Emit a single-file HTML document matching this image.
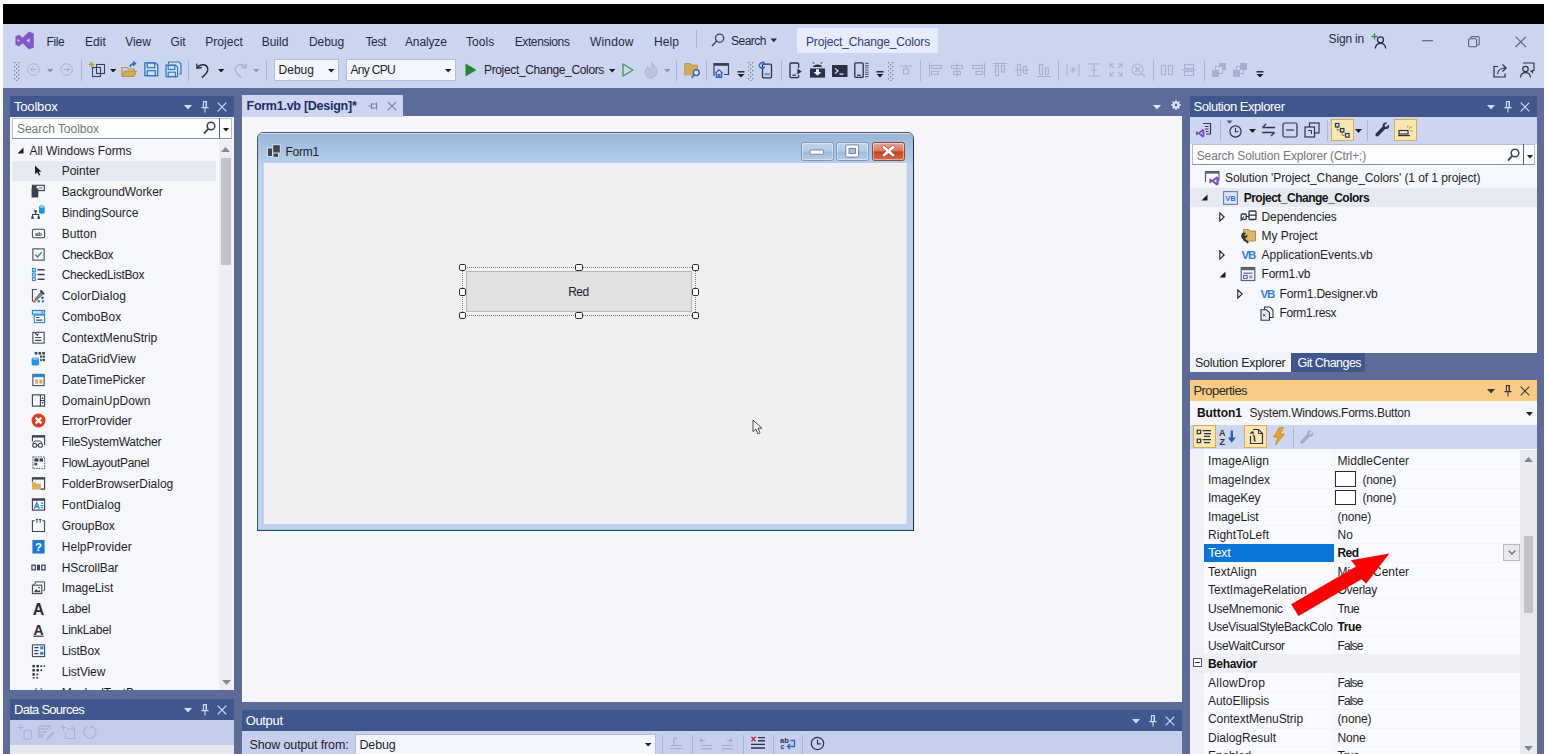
<!DOCTYPE html>
<html lang="en"><head><meta charset="utf-8"><title>Project_Change_Colors - Microsoft Visual Studio</title><style>
html,body{margin:0;padding:0;background:#fff;}
body{width:1548px;height:754px;position:relative;overflow:hidden;font-family:"Liberation Sans",sans-serif;}
#root{position:absolute;left:0;top:0;width:1548px;height:754px;overflow:hidden;}
#root div,#root span,#root svg{position:absolute;box-sizing:border-box;}
.t{white-space:nowrap;line-height:16px;height:16px;}
</style></head><body><div id="root">
<div style="left:3px;top:4px;width:1541px;height:750px;background:#5d6b99;"></div>
<div style="left:3px;top:4px;width:1541px;height:20px;background:#000;"></div>
<div style="left:3px;top:24px;width:1541px;height:64px;background:#ccd5f0;"></div>
<svg style="left:15px;top:30.5px;" width="19" height="19" viewBox="0 0 19 19"><path d="M14 0.4 L18.8 2.6 V16.4 L14 18.6 L7.5 12.2 L4 15.6 L0.4 13.4 V5.6 L4 3.4 L7.5 6.8 Z M14.6 7.2 V11.8 L11.4 9.5 Z M2.8 7.9 V11.1 L4.9 9.5 Z" fill="#8456cd" fill-rule="evenodd"></path></svg>
<span class="t" style="left: 46.5px; top: 33.6px; font-size: 12px; color: rgb(31, 42, 68); letter-spacing: -0.411px;">File</span>
<span class="t" style="left: 85px; top: 33.6px; font-size: 12px; color: rgb(31, 42, 68); letter-spacing: 0.078px;">Edit</span>
<span class="t" style="left: 125.3px; top: 33.6px; font-size: 12px; color: rgb(31, 42, 68); letter-spacing: -0.074px;">View</span>
<span class="t" style="left: 170.5px; top: 33.6px; font-size: 12px; color: rgb(31, 42, 68); letter-spacing: -0.115px;">Git</span>
<span class="t" style="left: 205.3px; top: 33.6px; font-size: 12px; color: rgb(31, 42, 68); letter-spacing: 0.02px;">Project</span>
<span class="t" style="left: 261.7px; top: 33.6px; font-size: 12px; color: rgb(31, 42, 68); letter-spacing: -0.017px;">Build</span>
<span class="t" style="left: 309px; top: 33.6px; font-size: 12px; color: rgb(31, 42, 68); letter-spacing: -0.075px;">Debug</span>
<span class="t" style="left: 365.5px; top: 33.6px; font-size: 12px; color: rgb(31, 42, 68); letter-spacing: -0.379px;">Test</span>
<span class="t" style="left: 405px; top: 33.6px; font-size: 12px; color: rgb(31, 42, 68); letter-spacing: -0.143px;">Analyze</span>
<span class="t" style="left: 466px; top: 33.6px; font-size: 12px; color: rgb(31, 42, 68); letter-spacing: 0.057px;">Tools</span>
<span class="t" style="left: 514.7px; top: 33.6px; font-size: 12px; color: rgb(31, 42, 68); letter-spacing: -0.39px;">Extensions</span>
<span class="t" style="left: 590px; top: 33.6px; font-size: 12px; color: rgb(31, 42, 68); letter-spacing: 0.169px;">Window</span>
<span class="t" style="left: 654px; top: 33.6px; font-size: 12px; color: rgb(31, 42, 68); letter-spacing: 0.078px;">Help</span>
<div style="left:696px;top:30px;width:1px;height:18px;background:#a8b2d6;"></div>
<svg style="left:711px;top:33px;" width="14" height="14" viewBox="0 0 14 14"><circle cx="8.6" cy="5.2" r="4.1" fill="none" stroke="#3a425e" stroke-width="1.3"></circle><path d="M5.6 8.2 L1 12.9" stroke="#3a425e" stroke-width="1.5" fill="none"></path></svg>
<span class="t" style="left: 731px; top: 33px; font-size: 12px; color: rgb(31, 42, 68); letter-spacing: -0.505px;">Search</span>
<svg style="left:770px;top:38.2px;" width="8" height="5" viewBox="0 0 8 5"><path d="M0.5 0.5 H7 L3.75 4.2 Z" fill="#1f2a44"></path></svg>
<div style="left:797px;top:28px;width:141px;height:25px;background:#e6ecfb;"></div>
<span class="t" style="left: 806px; top: 34px; font-size: 12px; color: rgb(43, 63, 120); letter-spacing: -0.162px;">Project_Change_Colors</span>
<span class="t" style="left: 1328.6px; top: 31.3px; font-size: 12px; color: rgb(31, 42, 68); letter-spacing: -0.172px;">Sign in</span>
<svg style="left:1371px;top:33px;" width="17" height="17" viewBox="0 0 17 17"><circle cx="9.5" cy="6.8" r="3" fill="none" stroke="#1f2a44" stroke-width="1.3"></circle><path d="M4.3 15.5 C4.6 11.8 7 10.4 9.5 10.4 C12 10.4 14.4 11.8 14.7 15.5" fill="none" stroke="#1f2a44" stroke-width="1.3"></path><path d="M3.5 0.5 V6.5 M0.5 3.5 H6.5" stroke="#2e8b3d" stroke-width="1.3"></path></svg>
<svg style="left:1422px;top:40.3px;" width="11" height="2" viewBox="0 0 11 2"><path d="M0 0.7 H11" stroke="#5a6284" stroke-width="1.2"></path></svg>
<svg style="left:1468px;top:36px;" width="12" height="12" viewBox="0 0 12 12"><rect x="0.6" y="2.8" width="8" height="8" rx="1" fill="none" stroke="#5a6284" stroke-width="1.1"></rect><path d="M2.8 2.6 V1.6 Q2.8 0.6 3.8 0.6 H10.4 Q11.2 0.6 11.2 1.6 V8.2 Q11.2 9 10.2 9 H8.8" fill="none" stroke="#5a6284" stroke-width="1.1"></path></svg>
<svg style="left:1515px;top:36px;" width="12" height="12" viewBox="0 0 12 12"><path d="M0.6 0.6 L11 11 M11 0.6 L0.6 11" stroke="#5a6284" stroke-width="1.1"></path></svg>
<div style="left:0;top:0.9px;width:1548px;height:100px;">
<svg style="left:14px;top:61px;" width="6" height="19" viewBox="0 0 6 19"><rect x="0" y="0" width="1.3" height="1.3" fill="#7a83a6"></rect><rect x="4" y="0" width="1.3" height="1.3" fill="#7a83a6"></rect><rect x="2" y="2" width="1.3" height="1.3" fill="#7a83a6"></rect><rect x="0" y="4" width="1.3" height="1.3" fill="#7a83a6"></rect><rect x="4" y="4" width="1.3" height="1.3" fill="#7a83a6"></rect><rect x="2" y="6" width="1.3" height="1.3" fill="#7a83a6"></rect><rect x="0" y="8" width="1.3" height="1.3" fill="#7a83a6"></rect><rect x="4" y="8" width="1.3" height="1.3" fill="#7a83a6"></rect><rect x="2" y="10" width="1.3" height="1.3" fill="#7a83a6"></rect><rect x="0" y="12" width="1.3" height="1.3" fill="#7a83a6"></rect><rect x="4" y="12" width="1.3" height="1.3" fill="#7a83a6"></rect><rect x="2" y="14" width="1.3" height="1.3" fill="#7a83a6"></rect><rect x="0" y="16" width="1.3" height="1.3" fill="#7a83a6"></rect><rect x="4" y="16" width="1.3" height="1.3" fill="#7a83a6"></rect><rect x="2" y="18" width="1.3" height="1.3" fill="#7a83a6"></rect></svg>
<svg style="left:26.5px;top:62.5px;" width="13" height="13" viewBox="0 0 13 13"><circle cx="6.5" cy="6.5" r="5.8" fill="none" stroke="#a7b0cf" stroke-width="1"></circle><path d="M9.6 6.5 H3.6 M6 4 L3.5 6.5 L6 9" fill="none" stroke="#a7b0cf" stroke-width="1"></path></svg>
<svg style="left:46.8px;top:67.7px;" width="6.4" height="3.6" viewBox="0 0 6.4 3.6"><path d="M0 0 H6.4 L3.2 3.6 Z" fill="#8d95b5"></path></svg>
<svg style="left:59.5px;top:62.5px;" width="13" height="13" viewBox="0 0 13 13"><circle cx="6.5" cy="6.5" r="5.8" fill="none" stroke="#a7b0cf" stroke-width="1"></circle><path d="M3.4 6.5 H9.4 M7 4 L9.5 6.5 L7 9" fill="none" stroke="#a7b0cf" stroke-width="1"></path></svg>
<div style="left:81px;top:59px;width:1px;height:21px;background:#a9b3d6;"></div>
<svg style="left:88px;top:60px;" width="18" height="18" viewBox="0 0 18 18"><rect x="4.5" y="6.5" width="8" height="9" fill="#ccd5f0" stroke="#3b4158" stroke-width="1.1"></rect><rect x="8.5" y="3.5" width="8" height="9" fill="none" stroke="#3b4158" stroke-width="1.1"></rect><path d="M3.5 0.5 V6.5 M0.5 3.5 H6.5 M1.4 1.4 L5.6 5.6 M5.6 1.4 L1.4 5.6" stroke="#c79b2a" stroke-width="1"></path></svg>
<svg style="left:110.3px;top:67.7px;" width="6.4" height="3.6" viewBox="0 0 6.4 3.6"><path d="M0 0 H6.4 L3.2 3.6 Z" fill="#1e1e1e"></path></svg>
<svg style="left:121px;top:60px;" width="17" height="18" viewBox="0 0 17 18"><path d="M1 15.5 V6.5 H6 L7.5 8 H13 V10" fill="none" stroke="#b8923f" stroke-width="1.2"></path><path d="M1 15.5 L3.5 10 H15.5 L13 15.5 Z" fill="#d1ab57" stroke="#b8923f" stroke-width="1"></path><path d="M9 6 C9.5 3.5 11.5 2.5 14 2.5 M12 0.5 L14.5 2.5 L12 4.8" fill="none" stroke="#2f66b8" stroke-width="1.4"></path></svg>
<svg style="left:144px;top:61px;" width="15" height="15" viewBox="0 0 15 15"><g transform="translate(0.3,0.3) scale(1.0)"><path d="M0.6 0.6 H11.2 L13.4 2.8 V13.4 H0.6 Z" fill="#cfe0f7" stroke="#2f6fc4" stroke-width="1.3"></path><rect x="3" y="0.8" width="7.4" height="4.6" fill="#cfe0f7" stroke="#2f6fc4" stroke-width="1.2"></rect><rect x="3" y="8.4" width="8" height="5" fill="#cfe0f7" stroke="#2f6fc4" stroke-width="1.2"></rect></g></svg>
<svg style="left:165px;top:60px;" width="17" height="17" viewBox="0 0 17 17"><path d="M3.5 3 V1 H14 L16 3 V13 H14" fill="#cfe0f7" stroke="#2f6fc4" stroke-width="1.2"></path><g transform="translate(0.5,3.6) scale(0.9)"><path d="M0.6 0.6 H11.2 L13.4 2.8 V13.4 H0.6 Z" fill="#cfe0f7" stroke="#2f6fc4" stroke-width="1.3"></path><rect x="3" y="0.8" width="7.4" height="4.6" fill="#cfe0f7" stroke="#2f6fc4" stroke-width="1.2"></rect><rect x="3" y="8.4" width="8" height="5" fill="#cfe0f7" stroke="#2f6fc4" stroke-width="1.2"></rect></g></svg>
<div style="left:188px;top:59px;width:1px;height:21px;background:#a9b3d6;"></div>
<svg style="left:195px;top:60px;" width="16" height="18" viewBox="0 0 16 18"><path d="M2.2 6.8 C5.5 2.2 12.5 3 12.8 8.2 C13 11.5 10.2 13.8 6.8 16.6" fill="none" stroke="#2b2f42" stroke-width="1.5"></path><path d="M1.6 2.6 L2.2 7.2 L6.8 6.6" fill="none" stroke="#2b2f42" stroke-width="1.5"></path></svg>
<svg style="left:218.3px;top:67.7px;" width="6.4" height="3.6" viewBox="0 0 6.4 3.6"><path d="M0 0 H6.4 L3.2 3.6 Z" fill="#1e1e1e"></path></svg>
<svg style="left:232px;top:60px;" width="16" height="18" viewBox="0 0 16 18"><path d="M13.8 6.8 C10.5 2.2 3.5 3 3.2 8.2 C3 11.5 5.8 13.8 9.2 16.6" fill="none" stroke="#a7b0cf" stroke-width="1.3"></path><path d="M14.4 2.6 L13.8 7.2 L9.2 6.6" fill="none" stroke="#a7b0cf" stroke-width="1.3"></path></svg>
<svg style="left:253.3px;top:67.7px;" width="6.4" height="3.6" viewBox="0 0 6.4 3.6"><path d="M0 0 H6.4 L3.2 3.6 Z" fill="#8d95b5"></path></svg>
<div style="left:266px;top:59px;width:1px;height:21px;background:#a9b3d6;"></div>
<div style="left:274px;top:58px;width:65px;height:22px;background:#f4f6fd;border:1px solid #b4bddc;"></div>
<span class="t" style="left: 278.5px; top: 61px; font-size: 12px; color: rgb(30, 30, 30); letter-spacing: 0.025px;">Debug</span>
<svg style="left:328.3px;top:68.2px;" width="6.4" height="3.6" viewBox="0 0 6.4 3.6"><path d="M0 0 H6.4 L3.2 3.6 Z" fill="#1e1e1e"></path></svg>
<div style="left:346px;top:58px;width:110px;height:22px;background:#f4f6fd;border:1px solid #b4bddc;"></div>
<span class="t" style="left: 350.5px; top: 61px; font-size: 12px; color: rgb(30, 30, 30); letter-spacing: -0.694px;">Any CPU</span>
<svg style="left:445.3px;top:68.2px;" width="6.4" height="3.6" viewBox="0 0 6.4 3.6"><path d="M0 0 H6.4 L3.2 3.6 Z" fill="#1e1e1e"></path></svg>
<svg style="left:465px;top:62px;" width="12" height="14" viewBox="0 0 12 14"><path d="M0.5 0.5 L11.5 7 L0.5 13.5 Z" fill="#1e8a2d"></path></svg>
<span class="t" style="left: 484px; top: 61px; font-size: 12px; color: rgb(30, 30, 30); letter-spacing: -0.353px;">Project_Change_Colors</span>
<svg style="left:608.8px;top:68.2px;" width="6.4" height="3.6" viewBox="0 0 6.4 3.6"><path d="M0 0 H6.4 L3.2 3.6 Z" fill="#1e1e1e"></path></svg>
<svg style="left:622px;top:62px;" width="12" height="14" viewBox="0 0 12 14"><path d="M1 1 L11 7 L1 13 Z" fill="none" stroke="#3c9a4a" stroke-width="1.3" stroke-linejoin="round"></path></svg>
<svg style="left:644px;top:60px;" width="15" height="18" viewBox="0 0 15 18"><path d="M8 1 C9 4 13.5 6.5 13 11.5 C12.6 15 9.8 17 7 17 C3.5 17 1 14.5 1.2 11 C1.4 8.5 3 7.5 3.6 5.5 C5 6.5 5.2 8 5.4 9 C6.8 7 8.4 4.5 8 1 Z" fill="#bcc3dc" stroke="#a7b0cf" stroke-width="0.8"></path></svg>
<svg style="left:663.8px;top:68.2px;" width="6.4" height="3.6" viewBox="0 0 6.4 3.6"><path d="M0 0 H6.4 L3.2 3.6 Z" fill="#8d95b5"></path></svg>
<div style="left:676px;top:59px;width:1px;height:21px;background:#a9b3d6;"></div>
<svg style="left:684px;top:61px;" width="17" height="17" viewBox="0 0 17 17"><path d="M0.8 13.5 V1.5 H6 L7.5 3.2 H13.5 V7" fill="#d1ab57" stroke="#b8923f" stroke-width="1"></path><path d="M0.8 13.5 V4.8 H13.5 V8.5 H9 V13.5 Z" fill="#d1ab57"></path><circle cx="12.3" cy="10.6" r="2.9" fill="#e8eefc" stroke="#2f66b8" stroke-width="1.5"></circle><path d="M10.2 12.8 L7.6 15.8" stroke="#2f66b8" stroke-width="1.7"></path></svg>
<div style="left:706px;top:59px;width:1px;height:21px;background:#a9b3d6;"></div>
<svg style="left:713px;top:61px;" width="17" height="17" viewBox="0 0 17 17"><path d="M1 14 V1.5 H15.5 V12.5 H11" fill="none" stroke="#3b4158" stroke-width="1.2"></path><path d="M1 2.6 H15.5" stroke="#3b4158" stroke-width="2.4"></path><path d="M2.2 11.4 L6 7.8 L9.8 11.4 M3.4 10.8 V15.4 H8.6 V10.8 M5.2 15.4 V12.6 H6.8 V15.4" fill="none" stroke="#2f66b8" stroke-width="1.3"></path></svg>
<svg style="left:737px;top:70.4px;" width="8" height="7" viewBox="0 0 8 7"><path d="M0.5 0.8 H7.5" stroke="#1e1e1e" stroke-width="1.4"></path><path d="M0.5 3 H7.5 L4 6.6 Z" fill="#1e1e1e"></path></svg>
<svg style="left:747.5px;top:61px;" width="6" height="19" viewBox="0 0 6 19"><rect x="0" y="0" width="1.3" height="1.3" fill="#7a83a6"></rect><rect x="4" y="0" width="1.3" height="1.3" fill="#7a83a6"></rect><rect x="2" y="2" width="1.3" height="1.3" fill="#7a83a6"></rect><rect x="0" y="4" width="1.3" height="1.3" fill="#7a83a6"></rect><rect x="4" y="4" width="1.3" height="1.3" fill="#7a83a6"></rect><rect x="2" y="6" width="1.3" height="1.3" fill="#7a83a6"></rect><rect x="0" y="8" width="1.3" height="1.3" fill="#7a83a6"></rect><rect x="4" y="8" width="1.3" height="1.3" fill="#7a83a6"></rect><rect x="2" y="10" width="1.3" height="1.3" fill="#7a83a6"></rect><rect x="0" y="12" width="1.3" height="1.3" fill="#7a83a6"></rect><rect x="4" y="12" width="1.3" height="1.3" fill="#7a83a6"></rect><rect x="2" y="14" width="1.3" height="1.3" fill="#7a83a6"></rect><rect x="0" y="16" width="1.3" height="1.3" fill="#7a83a6"></rect><rect x="4" y="16" width="1.3" height="1.3" fill="#7a83a6"></rect><rect x="2" y="18" width="1.3" height="1.3" fill="#7a83a6"></rect></svg>
<svg style="left:757px;top:60px;" width="16" height="18" viewBox="0 0 16 18"><rect x="5.5" y="3.2" width="9" height="13.6" rx="1" fill="#ccd5f0" stroke="#2b2f42" stroke-width="1.3"></rect><rect x="7.6" y="12" width="5" height="2.4" fill="#8a8fa6"></rect><path d="M6.8 2.2 A2.8 2.8 0 1 0 7.8 5.4" fill="none" stroke="#2f66b8" stroke-width="1.4"></path><path d="M5.4 0.4 L7.6 2.4 L5 3.6" fill="none" stroke="#2f66b8" stroke-width="1.2"></path></svg>
<div style="left:781px;top:59px;width:1px;height:21px;background:#a9b3d6;"></div>
<svg style="left:789px;top:61px;" width="14" height="17" viewBox="0 0 14 17"><path d="M9.6 6 V2 Q9.6 1 8.6 1 H2 Q1 1 1 2 V14.6 Q1 15.6 2 15.6 H8.6 Q9.6 15.6 9.6 14.6 V13" fill="none" stroke="#2b2f42" stroke-width="1.3"></path><path d="M3.4 13.2 H7" stroke="#2b2f42" stroke-width="1.2"></path><path d="M8.4 6.4 L12.8 9.5 L8.4 12.6 Z" fill="#2b2f42"></path></svg>
<svg style="left:809px;top:60px;" width="17" height="18" viewBox="0 0 17 18"><path d="M4 6 C4 2.6 13 2.6 13 6 Z" fill="#2b2f42"></path><path d="M5 2.8 L3.8 1 M12 2.8 L13.2 1" stroke="#2b2f42" stroke-width="1"></path><path d="M1 7.5 H16 V16.6 H1 Z" fill="#2b2f42"></path><path d="M7 8.2 H10 V11 H12.4 L8.5 14.8 L4.6 11 H7 Z" fill="#e9edfa"></path></svg>
<svg style="left:832px;top:64px;" width="15.5" height="12" viewBox="0 0 15.5 12"><rect x="0" y="0" width="15.5" height="12" fill="#2b2f42"></rect><path d="M3 3.4 L6 6 L3 8.6 M7.4 9.2 H11.4" fill="none" stroke="#e9edfa" stroke-width="1.2"></path></svg>
<svg style="left:854px;top:61px;" width="15" height="17" viewBox="0 0 15 17"><rect x="0.8" y="0.8" width="8.4" height="14.6" rx="1" fill="none" stroke="#2b2f42" stroke-width="1.3"></rect><path d="M3 13.2 H7" stroke="#2b2f42" stroke-width="1.2"></path><path d="M11 1.4 H14.6 M11 3.6 H14.6 M11 5.8 H14.6 M11 8 H14.6 M11 10.2 H14.6 M11 12.4 H14.6 M11 14.6 H14.6" stroke="#5c6178" stroke-width="1.1"></path></svg>
<svg style="left:876px;top:70.4px;" width="8" height="7" viewBox="0 0 8 7"><path d="M0.5 0.8 H7.5" stroke="#1e1e1e" stroke-width="1.4"></path><path d="M0.5 3 H7.5 L4 6.6 Z" fill="#1e1e1e"></path></svg>
<svg style="left:887.5px;top:61px;" width="6" height="19" viewBox="0 0 6 19"><rect x="0" y="0" width="1.3" height="1.3" fill="#7a83a6"></rect><rect x="4" y="0" width="1.3" height="1.3" fill="#7a83a6"></rect><rect x="2" y="2" width="1.3" height="1.3" fill="#7a83a6"></rect><rect x="0" y="4" width="1.3" height="1.3" fill="#7a83a6"></rect><rect x="4" y="4" width="1.3" height="1.3" fill="#7a83a6"></rect><rect x="2" y="6" width="1.3" height="1.3" fill="#7a83a6"></rect><rect x="0" y="8" width="1.3" height="1.3" fill="#7a83a6"></rect><rect x="4" y="8" width="1.3" height="1.3" fill="#7a83a6"></rect><rect x="2" y="10" width="1.3" height="1.3" fill="#7a83a6"></rect><rect x="0" y="12" width="1.3" height="1.3" fill="#7a83a6"></rect><rect x="4" y="12" width="1.3" height="1.3" fill="#7a83a6"></rect><rect x="2" y="14" width="1.3" height="1.3" fill="#7a83a6"></rect><rect x="0" y="16" width="1.3" height="1.3" fill="#7a83a6"></rect><rect x="4" y="16" width="1.3" height="1.3" fill="#7a83a6"></rect><rect x="2" y="18" width="1.3" height="1.3" fill="#7a83a6"></rect></svg>
<svg style="left:898.0px;top:61.599999999999994px;" width="16" height="16" viewBox="0 0 16 16"><g fill="none" stroke="#a7b0cf" stroke-width="1.1"><path d="M2 4 H14 M8 4 V7"></path><rect x="5.5" y="7" width="5" height="5"></rect></g></svg>
<div style="left:920px;top:59px;width:1px;height:21px;background:#a9b3d6;"></div>
<svg style="left:928.0px;top:61.599999999999994px;" width="16" height="16" viewBox="0 0 16 16"><g fill="none" stroke="#a7b0cf" stroke-width="1.1"><path d="M1.5 1 V15"></path><rect x="3.5" y="3.5" width="10" height="3"></rect><rect x="3.5" y="9.5" width="6.5" height="3"></rect></g></svg>
<svg style="left:949.0px;top:61.599999999999994px;" width="16" height="16" viewBox="0 0 16 16"><g fill="none" stroke="#a7b0cf" stroke-width="1.1"><path d="M8 1 V15"></path><rect x="2.5" y="3.5" width="11" height="3"></rect><rect x="4.5" y="9.5" width="7" height="3"></rect></g></svg>
<svg style="left:970.0px;top:61.599999999999994px;" width="16" height="16" viewBox="0 0 16 16"><g fill="none" stroke="#a7b0cf" stroke-width="1.1"><path d="M14.5 1 V15"></path><rect x="2.5" y="3.5" width="10" height="3"></rect><rect x="6" y="9.5" width="6.5" height="3"></rect></g></svg>
<svg style="left:992.0px;top:61.599999999999994px;" width="16" height="16" viewBox="0 0 16 16"><g fill="none" stroke="#a7b0cf" stroke-width="1.1"><path d="M1 1.5 H15"></path><rect x="3.5" y="3.5" width="3" height="10"></rect><rect x="9.5" y="3.5" width="3" height="6.5"></rect></g></svg>
<svg style="left:1014.0px;top:61.599999999999994px;" width="16" height="16" viewBox="0 0 16 16"><g fill="none" stroke="#a7b0cf" stroke-width="1.1"><path d="M1 8 H15"></path><rect x="3.5" y="2.5" width="3" height="11"></rect><rect x="9.5" y="4.5" width="3" height="7"></rect></g></svg>
<svg style="left:1036.0px;top:61.599999999999994px;" width="16" height="16" viewBox="0 0 16 16"><g fill="none" stroke="#a7b0cf" stroke-width="1.1"><path d="M1 14.5 H15"></path><rect x="3.5" y="2.5" width="3" height="10"></rect><rect x="9.5" y="6" width="3" height="6.5"></rect></g></svg>
<div style="left:1058px;top:59px;width:1px;height:21px;background:#a9b3d6;"></div>
<svg style="left:1065.0px;top:61.599999999999994px;" width="16" height="16" viewBox="0 0 16 16"><g fill="none" stroke="#a7b0cf" stroke-width="1.1"><path d="M2 2 V14 M14 2 V14 M8 5 V11 M5.4 6.5 L10.6 9.5 M10.6 6.5 L5.4 9.5"></path></g></svg>
<svg style="left:1086.0px;top:61.599999999999994px;" width="16" height="16" viewBox="0 0 16 16"><g fill="none" stroke="#a7b0cf" stroke-width="1.1"><path d="M2 2 H14 M2 14 H14 M8 2 V14 M5 8 H11"></path></g></svg>
<svg style="left:1108.0px;top:61.599999999999994px;" width="16" height="16" viewBox="0 0 16 16"><g fill="none" stroke="#a7b0cf" stroke-width="1.1"><path d="M2 6 V2 H6 M10 2 H14 V6 M14 10 V14 H10 M6 14 H2 V10 M2 2 L6 6 M14 2 L10 6 M14 14 L10 10 M2 14 L6 10"></path></g></svg>
<svg style="left:1130.0px;top:61.599999999999994px;" width="16" height="16" viewBox="0 0 16 16"><g fill="none" stroke="#a7b0cf" stroke-width="1.1"><circle cx="7.5" cy="7.5" r="5.5"></circle><path d="M11.5 11.5 L15 15 M5 5 L10 10 M10 5 L5 10"></path></g></svg>
<div style="left:1153px;top:59px;width:1px;height:21px;background:#a9b3d6;"></div>
<svg style="left:1159.0px;top:61.599999999999994px;" width="16" height="16" viewBox="0 0 16 16"><g fill="none" stroke="#a7b0cf" stroke-width="1.1"><rect x="2.5" y="3.5" width="4" height="9"></rect><rect x="9.5" y="3.5" width="4" height="9"></rect></g></svg>
<svg style="left:1181.0px;top:61.599999999999994px;" width="16" height="16" viewBox="0 0 16 16"><g fill="none" stroke="#a7b0cf" stroke-width="1.1"><rect x="3.5" y="2.5" width="9" height="4"></rect><rect x="3.5" y="9.5" width="9" height="4"></rect><path d="M1 8 H15"></path></g></svg>
<div style="left:1204px;top:59px;width:1px;height:21px;background:#a9b3d6;"></div>
<svg style="left:1211px;top:61px;" width="16" height="16" viewBox="0 0 16 16"><rect x="8" y="1" width="7" height="7" fill="#a7b0cf"></rect><rect x="4.5" y="4.5" width="7" height="7" fill="#ccd5f0" stroke="#a7b0cf"></rect><rect x="1" y="8" width="7" height="7" fill="#a7b0cf"></rect></svg>
<svg style="left:1232px;top:61px;" width="16" height="16" viewBox="0 0 16 16"><rect x="8" y="1" width="7" height="7" fill="#a7b0cf"></rect><rect x="1" y="8" width="7" height="7" fill="#a7b0cf"></rect><rect x="4.5" y="4.5" width="7" height="7" fill="none" stroke="#a7b0cf"></rect></svg>
<svg style="left:1256px;top:70.4px;" width="8" height="7" viewBox="0 0 8 7"><path d="M0.5 0.8 H7.5" stroke="#1e1e1e" stroke-width="1.4"></path><path d="M0.5 3 H7.5 L4 6.6 Z" fill="#1e1e1e"></path></svg>
<svg style="left:1493px;top:62px;" width="15" height="15" viewBox="0 0 15 15"><path d="M5 3.5 H1 V14 H12 V10.5" fill="none" stroke="#2b2f42" stroke-width="1.2"></path><path d="M4.5 11 C5 7 8 5 12.5 5 M9.5 1.5 L13.2 5 L9.5 8.5" fill="none" stroke="#2b2f42" stroke-width="1.2"></path></svg>
<svg style="left:1519px;top:61px;" width="16" height="17" viewBox="0 0 16 17"><path d="M4 1 H15 V8.5 H13.5 V10.5 L11.5 8.5" fill="none" stroke="#2b2f42" stroke-width="1.1"></path><circle cx="6.5" cy="7" r="2.7" fill="none" stroke="#2b2f42" stroke-width="1.2"></circle><path d="M1.5 15.5 C1.8 12 4 10.6 6.5 10.6 C9 10.6 11.2 12 11.5 15.5" fill="none" stroke="#2b2f42" stroke-width="1.2"></path></svg>
</div>
<div style="left:10px;top:96px;width:224px;height:21px;background:#40568d;"></div>
<span class="t" style="left: 14px; top: 98.5px; font-size: 13px; color: rgb(255, 255, 255); letter-spacing: -0.188px;">Toolbox</span>
<svg style="left:184px;top:104.5px;" width="8" height="5" viewBox="0 0 8 5"><path d="M0 0 H8 L4 4.6 Z" fill="#d5dcf1"></path></svg>
<svg style="left:201px;top:100.5px;" width="8" height="12" viewBox="0 0 8 12"><path d="M2 0.6 H6 M2.4 0.6 V6.4 M5.4 0.6 V6.4 M0.4 6.6 H7.6 M4 6.6 V11.6" fill="none" stroke="#d5dcf1" stroke-width="1.1"></path><path d="M4.6 0.6 H5.9 V6.4 H4.6 Z" fill="#d5dcf1"></path></svg>
<svg style="left:217px;top:101.5px;" width="10" height="10" viewBox="0 0 10 10"><path d="M0.7 0.7 L9.3 9.3 M9.3 0.7 L0.7 9.3" stroke="#d5dcf1" stroke-width="1.2"></path></svg>
<div style="left:10px;top:117px;width:224px;height:573px;background:#f6f7fb;"></div>
<div style="left:12px;top:118px;width:220px;height:21px;background:#fdfdfe;border:1px solid #b4bcd6;border-bottom-color:#8791ae;"></div>
<span class="t" style="left: 17px; top: 120.5px; font-size: 12px; color: rgb(118, 118, 118); letter-spacing: -0.036px;">Search Toolbox</span>
<svg style="left:203px;top:121px;" width="13" height="14" viewBox="0 0 13 14"><circle cx="8" cy="5" r="3.8" fill="none" stroke="#3a3f55" stroke-width="1.5"></circle><path d="M5.2 7.8 L1 12.6" stroke="#3a3f55" stroke-width="1.8"></path></svg>
<div style="left:219px;top:118px;width:1px;height:21px;background:#5a607a;"></div>
<svg style="left:222.5px;top:127.5px;" width="6" height="4" viewBox="0 0 6 4"><path d="M0 0 H6 L3 3.6 Z" fill="#1e1e1e"></path></svg>
<div style="left:219px;top:140px;width:13px;height:550px;background:#eeeef2;"></div>
<div style="left:221px;top:158px;width:10px;height:107px;background:#c2c3c9;"></div>
<svg style="left:221px;top:146.7px;" width="9" height="5" viewBox="0 0 9 5"><path d="M0 5 L4.5 0 L9 5 Z" fill="#868999"></path></svg>
<svg style="left:221.5px;top:680px;" width="9" height="5" viewBox="0 0 9 5"><path d="M0 0 L4.5 5 L9 0 Z" fill="#868999"></path></svg>
<svg style="left:17px;top:147px;" width="7" height="7" viewBox="0 0 7 7"><path d="M6.5 0.5 V6.5 H0.5 Z" fill="#1e1e1e"></path></svg>
<span class="t" style="left: 29.5px; top: 143px; font-size: 12px; color: rgb(30, 30, 30); letter-spacing: -0.04px;">All Windows Forms</span>
<div style="left:12px;top:161px;width:204px;height:20px;background:#e6e8f2;"></div>
<div style="left:10px;top:140px;width:210px;height:550px;overflow:hidden;">
<svg style="left:21px;top:23.0px;" width="15" height="15" viewBox="0 0 16 16"><path d="M4.3 2.6 V12 L6.6 9.8 L8.4 13.4 L9.9 12.7 L8.2 9.2 H11.2 Z" fill="#1e1e1e"></path></svg>
<span class="t" style="left: 51.7px; top: 23px; font-size: 12px; color: rgb(30, 30, 30); letter-spacing: -0.004px;">Pointer</span>
<svg style="left:21px;top:43.9px;" width="15" height="15" viewBox="0 0 16 16"><rect x="1.6" y="1.4" width="12.6" height="5.6" fill="#f6f8fd" stroke="#3b3f52" stroke-width="1.2"></rect><path d="M1 2 H6 V4.6 H7.8 V14.4 H0.6 V4.6 H1 Z" fill="#3b3f52"></path><path d="M8.5 4.2 H12" stroke="#3b3f52" stroke-width="1"></path></svg>
<span class="t" style="left: 51.7px; top: 43.9px; font-size: 12px; color: rgb(30, 30, 30); letter-spacing: -0.094px;">BackgroundWorker</span>
<svg style="left:21px;top:64.7px;" width="15" height="15" viewBox="0 0 16 16"><path d="M8.5 2 C8.5 0.2 14.6 0.2 14.6 2 V8 C14.6 9.8 8.5 9.8 8.5 8 Z" fill="#1f93e6"></path><ellipse cx="11.55" cy="2" rx="2.6" ry="0.9" fill="#8fd0fa"></ellipse><path d="M4.9 7 V10 M1.6 13 V10.2 H8.2 V13" fill="none" stroke="#3b3f52" stroke-width="1.1"></path><rect x="3.6" y="5.4" width="2.6" height="2.6" fill="#3b3f52"></rect><rect x="0.3" y="12.2" width="2.6" height="2.6" fill="#3b3f52"></rect><rect x="6.9" y="12.2" width="2.6" height="2.6" fill="#3b3f52"></rect></svg>
<span class="t" style="left: 51.7px; top: 64.7px; font-size: 12px; color: rgb(30, 30, 30); letter-spacing: -0.12px;">BindingSource</span>
<svg style="left:21px;top:85.6px;" width="15" height="15" viewBox="0 0 16 16"><rect x="1.5" y="3.5" width="13" height="9" rx="1.6" fill="none" stroke="#3b3f52" stroke-width="1.1"></rect><text x="8" y="10.6" font-size="6.5" font-weight="bold" text-anchor="middle" fill="#3b3f52" font-family="Liberation Sans, sans-serif">ab</text></svg>
<span class="t" style="left: 51.7px; top: 85.6px; font-size: 12px; color: rgb(30, 30, 30); letter-spacing: 0.049px;">Button</span>
<svg style="left:21px;top:106.5px;" width="15" height="15" viewBox="0 0 16 16"><rect x="2" y="2" width="12" height="12" fill="none" stroke="#3b3f52" stroke-width="1.1"></rect><path d="M4.6 8.2 L7 10.6 L11.4 5.4" fill="none" stroke="#2e8b3d" stroke-width="1.4"></path></svg>
<span class="t" style="left: 51.7px; top: 106.5px; font-size: 12px; color: rgb(30, 30, 30); letter-spacing: -0.4px;">CheckBox</span>
<svg style="left:21px;top:127.4px;" width="15" height="15" viewBox="0 0 16 16"><rect x="1.6" y="1.6" width="3" height="3" fill="none" stroke="#1f8ad8" stroke-width="1.2"></rect><rect x="1.6" y="6.5" width="3" height="3" fill="none" stroke="#1f8ad8" stroke-width="1.2"></rect><rect x="1.6" y="11.4" width="3" height="3" fill="none" stroke="#1f8ad8" stroke-width="1.2"></rect><path d="M7 3 H14.5 M7 8 H14.5 M7 13 H14.5" stroke="#3b3f52" stroke-width="1.6"></path></svg>
<span class="t" style="left: 51.7px; top: 127.4px; font-size: 12px; color: rgb(30, 30, 30); letter-spacing: -0.301px;">CheckedListBox</span>
<svg style="left:21px;top:148.2px;" width="15" height="15" viewBox="0 0 16 16"><path d="M1.5 14.5 V1.5 H6" fill="none" stroke="#3b3f52" stroke-width="1.1"></path><path d="M4 12 L10.5 4.5 L12.5 6.5 L6 13 Z" fill="#8a8fa6" stroke="#3b3f52" stroke-width="0.8"></path><path d="M10 2.5 L14 6.5" stroke="#3b3f52" stroke-width="2"></path><rect x="2.5" y="13" width="2.4" height="2.4" fill="#d13438"></rect><rect x="7" y="13" width="2.4" height="2.4" fill="#2e8b3d"></rect><rect x="11.5" y="13" width="2.4" height="2.4" fill="#1f8ad8"></rect><path d="M12 9 V12 M14 10.5 H10.5" stroke="#3b3f52" stroke-width="1"></path></svg>
<span class="t" style="left: 51.7px; top: 148.2px; font-size: 12px; color: rgb(30, 30, 30); letter-spacing: 0.163px;">ColorDialog</span>
<svg style="left:21px;top:169.1px;" width="15" height="15" viewBox="0 0 16 16"><rect x="1.5" y="1.5" width="13" height="4" fill="#cfe0f7" stroke="#1f8ad8" stroke-width="1.2"></rect><rect x="3.5" y="6.5" width="11" height="8" fill="none" stroke="#1f8ad8" stroke-width="1.2"></rect><path d="M5.5 9 H9 M5.5 11.8 H12" stroke="#3b3f52" stroke-width="1.2"></path><path d="M10.5 2.7 H13.5 L12 4.5 Z" fill="#1f8ad8"></path></svg>
<span class="t" style="left: 51.7px; top: 169.1px; font-size: 12px; color: rgb(30, 30, 30); letter-spacing: 0.016px;">ComboBox</span>
<svg style="left:21px;top:190.0px;" width="15" height="15" viewBox="0 0 16 16"><rect x="2" y="2.5" width="12" height="11.5" fill="none" stroke="#3b3f52" stroke-width="1.1"></rect><path d="M4.5 8 H11 M4.5 11 H11" stroke="#3b3f52" stroke-width="1.2"></path><path d="M4 3 L7 5.6 L8 3.8" fill="none" stroke="#3b3f52" stroke-width="1.2"></path></svg>
<span class="t" style="left: 51.7px; top: 190px; font-size: 12px; color: rgb(30, 30, 30); letter-spacing: -0.034px;">ContextMenuStrip</span>
<svg style="left:21px;top:210.8px;" width="15" height="15" viewBox="0 0 16 16"><path d="M0.6 8.4 C0.6 6.6 8.6 6.6 8.6 8.4 V14 C8.6 15.8 0.6 15.8 0.6 14 Z" fill="#1f93e6"></path><ellipse cx="4.6" cy="8.3" rx="3.2" ry="0.9" fill="#8fd0fa"></ellipse><g fill="#3b3f52"><rect x="4" y="1" width="2.8" height="2.8"></rect><rect x="8" y="1" width="2.8" height="2.8"></rect><rect x="12" y="1" width="2.8" height="2.8"></rect><rect x="9.6" y="4.8" width="2" height="2.4"></rect><rect x="12.4" y="4.8" width="2.4" height="2.4"></rect><rect x="9.8" y="8.4" width="1.8" height="2.4"></rect><rect x="12.4" y="8.4" width="2.4" height="2.4"></rect></g></svg>
<span class="t" style="left: 51.7px; top: 210.8px; font-size: 12px; color: rgb(30, 30, 30); letter-spacing: 0.016px;">DataGridView</span>
<svg style="left:21px;top:231.7px;" width="15" height="15" viewBox="0 0 16 16"><rect x="2" y="2.5" width="12" height="12" fill="none" stroke="#3b3f52" stroke-width="1.1"></rect><rect x="2" y="2.5" width="12" height="3" fill="#1f8ad8"></rect><rect x="4.5" y="8" width="3" height="4.5" fill="#d1ab57"></rect><rect x="9" y="8" width="3" height="4.5" fill="#d1ab57"></rect></svg>
<span class="t" style="left: 51.7px; top: 231.7px; font-size: 12px; color: rgb(30, 30, 30); letter-spacing: -0.102px;">DateTimePicker</span>
<svg style="left:21px;top:252.6px;" width="15" height="15" viewBox="0 0 16 16"><rect x="1.5" y="2" width="13" height="12" fill="none" stroke="#3b3f52" stroke-width="1.2"></rect><path d="M10 2 V14 M10 8 H14.5" stroke="#3b3f52" stroke-width="1.1"></path><path d="M11 6.4 L12.3 4.2 L13.6 6.4 Z M11 9.6 L12.3 11.8 L13.6 9.6 Z" fill="#3b3f52"></path></svg>
<span class="t" style="left: 51.7px; top: 252.6px; font-size: 12px; color: rgb(30, 30, 30); letter-spacing: 0.135px;">DomainUpDown</span>
<svg style="left:21px;top:273.4px;" width="15" height="15" viewBox="0 0 16 16"><circle cx="8" cy="8" r="7.4" fill="#e53a1e"></circle><path d="M4.9 4.9 L11.1 11.1 M11.1 4.9 L4.9 11.1" stroke="#fff" stroke-width="2.4"></path></svg>
<span class="t" style="left: 51.7px; top: 273.4px; font-size: 12px; color: rgb(30, 30, 30); letter-spacing: -0.105px;">ErrorProvider</span>
<svg style="left:21px;top:294.3px;" width="15" height="15" viewBox="0 0 16 16"><path d="M1.5 8 V2 H14.5 V12" fill="none" stroke="#3b3f52" stroke-width="1.2"></path><path d="M1.5 2.8 H14.5" stroke="#3b3f52" stroke-width="2"></path><circle cx="4" cy="12" r="2.2" fill="none" stroke="#3b3f52" stroke-width="1.1"></circle><circle cx="10" cy="12" r="2.2" fill="none" stroke="#3b3f52" stroke-width="1.1"></circle><path d="M6.2 12 H7.8 M2 10 L4 7.5 H10 L12 10" fill="none" stroke="#3b3f52" stroke-width="1"></path></svg>
<span class="t" style="left: 51.7px; top: 294.3px; font-size: 12px; color: rgb(30, 30, 30); letter-spacing: -0.24px;">FileSystemWatcher</span>
<svg style="left:21px;top:315.2px;" width="15" height="15" viewBox="0 0 16 16"><rect x="2" y="2" width="12.5" height="12.5" fill="none" stroke="#3b3f52" stroke-width="1" stroke-dasharray="1.5 1.2"></rect><rect x="3.6" y="3.6" width="4.4" height="3.4" fill="#3b3f52"></rect><rect x="9.2" y="3.6" width="3.6" height="3.4" fill="#3b3f52"></rect><rect x="3.6" y="8.4" width="3" height="2.6" fill="#3b3f52"></rect></svg>
<span class="t" style="left: 51.7px; top: 315.2px; font-size: 12px; color: rgb(30, 30, 30); letter-spacing: -0.304px;">FlowLayoutPanel</span>
<svg style="left:21px;top:336.1px;" width="15" height="15" viewBox="0 0 16 16"><path d="M1.5 6 V1.8 H14.5 V14 H10" fill="none" stroke="#3b3f52" stroke-width="1.2"></path><path d="M1.5 2.8 H14.5" stroke="#3b3f52" stroke-width="2"></path><path d="M1 14.5 V6.5 H4.5 L5.8 8 H10.5 V14.5 Z" fill="#d9b25c"></path></svg>
<span class="t" style="left: 51.7px; top: 336.1px; font-size: 12px; color: rgb(30, 30, 30); letter-spacing: -0.029px;">FolderBrowserDialog</span>
<svg style="left:21px;top:356.9px;" width="15" height="15" viewBox="0 0 16 16"><rect x="1.5" y="2" width="13" height="12" fill="none" stroke="#3b3f52" stroke-width="1.2"></rect><path d="M1.5 3 H14.5" stroke="#3b3f52" stroke-width="2"></path><path d="M3.5 12.5 L6.2 6 L8.9 12.5 M4.4 10.4 H8" fill="none" stroke="#1f8ad8" stroke-width="1.4"></path><path d="M10.5 6.5 H13 M10.5 9 H13 M10.5 11.5 H13" stroke="#1f8ad8" stroke-width="1.2"></path></svg>
<span class="t" style="left: 51.7px; top: 356.9px; font-size: 12px; color: rgb(30, 30, 30); letter-spacing: 0.097px;">FontDialog</span>
<svg style="left:21px;top:377.8px;" width="15" height="15" viewBox="0 0 16 16"><path d="M4 3 H1.5 V14.5 H14.5 V3 H12" fill="none" stroke="#3b3f52" stroke-width="1.1"></path><path d="M5.2 1.5 H7.6 M6.4 1.5 V5 M8.6 1.5 H11 M9.8 1.5 V5" stroke="#3b3f52" stroke-width="1.1"></path></svg>
<span class="t" style="left: 51.7px; top: 377.8px; font-size: 12px; color: rgb(30, 30, 30); letter-spacing: -0.129px;">GroupBox</span>
<svg style="left:21px;top:398.7px;" width="15" height="15" viewBox="0 0 16 16"><rect x="1.5" y="1" width="13" height="14.5" fill="#1f7ad6"></rect><text x="8" y="12.6" font-size="12" font-weight="bold" text-anchor="middle" fill="#fff" font-family="Liberation Sans, sans-serif">?</text></svg>
<span class="t" style="left: 51.7px; top: 398.7px; font-size: 12px; color: rgb(30, 30, 30); letter-spacing: 0.052px;">HelpProvider</span>
<svg style="left:21px;top:419.5px;" width="15" height="15" viewBox="0 0 16 16"><rect x="1" y="5.5" width="3.6" height="5" fill="none" stroke="#3b3f52" stroke-width="1.3"></rect><rect x="11.4" y="5.5" width="3.6" height="5" fill="none" stroke="#3b3f52" stroke-width="1.3"></rect><rect x="6.4" y="5" width="3.2" height="6" fill="#3b3f52"></rect></svg>
<span class="t" style="left: 51.7px; top: 419.5px; font-size: 12px; color: rgb(30, 30, 30); letter-spacing: -0.086px;">HScrollBar</span>
<svg style="left:21px;top:440.4px;" width="15" height="15" viewBox="0 0 16 16"><path d="M4.5 4 V2 H14.5 V11 H12.5 M3 5.5 V3.8" fill="none" stroke="#3b3f52" stroke-width="1"></path><rect x="1.5" y="5.5" width="10" height="9" fill="none" stroke="#3b3f52" stroke-width="1.1"></rect><path d="M3 13 L5.5 9.5 L7.5 12 L8.8 10.6 L10.4 13 Z" fill="#3b3f52"></path><circle cx="8.6" cy="8" r="0.9" fill="#3b3f52"></circle></svg>
<span class="t" style="left: 51.7px; top: 440.4px; font-size: 12px; color: rgb(30, 30, 30); letter-spacing: -0.059px;">ImageList</span>
<svg style="left:21px;top:461.3px;" width="15" height="15" viewBox="0 0 16 16"><text x="8" y="15" font-size="17" font-weight="bold" text-anchor="middle" fill="#2b2b33" font-family="Liberation Sans, sans-serif">A</text></svg>
<span class="t" style="left: 51.7px; top: 461.3px; font-size: 12px; color: rgb(30, 30, 30); letter-spacing: -0.175px;">Label</span>
<svg style="left:21px;top:482.1px;" width="15" height="15" viewBox="0 0 16 16"><text x="8" y="13.4" font-size="15" font-weight="bold" text-anchor="middle" fill="#2b2b33" font-family="Liberation Sans, sans-serif">A</text><path d="M2.5 15.2 H13.5" stroke="#2b2b33" stroke-width="1.2"></path></svg>
<span class="t" style="left: 51.7px; top: 482.1px; font-size: 12px; color: rgb(30, 30, 30); letter-spacing: -0.208px;">LinkLabel</span>
<svg style="left:21px;top:503.0px;" width="15" height="15" viewBox="0 0 16 16"><rect x="1.5" y="2" width="13" height="12.5" fill="none" stroke="#3b3f52" stroke-width="1.1"></rect><path d="M3.5 5 H8 M3.5 8.2 H8 M3.5 11.4 H8" stroke="#3b3f52" stroke-width="1.4"></path><rect x="9.8" y="3.6" width="3.4" height="3.2" fill="#1f8ad8"></rect><rect x="9.8" y="9.4" width="3.4" height="3.2" fill="#1f8ad8"></rect></svg>
<span class="t" style="left: 51.7px; top: 503px; font-size: 12px; color: rgb(30, 30, 30); letter-spacing: -0.194px;">ListBox</span>
<svg style="left:21px;top:523.9px;" width="15" height="15" viewBox="0 0 16 16"><g fill="#2b2b33"><rect x="1.5" y="1" width="2.6" height="2.6"></rect><rect x="5.8" y="1" width="2.6" height="2.6"></rect><rect x="10.1" y="1.4" width="1.8" height="1.8"></rect><rect x="13.4" y="1.4" width="1.6" height="1.6"></rect><rect x="1.5" y="5.4" width="2.6" height="2.6"></rect><rect x="5.8" y="5.4" width="2.6" height="2.6"></rect><rect x="10.1" y="5.8" width="1.8" height="1.8"></rect><rect x="1.5" y="9.8" width="2.6" height="2.6"></rect><rect x="5.8" y="10.2" width="1.8" height="1.8"></rect><rect x="1.9" y="14" width="1.8" height="1.6"></rect><rect x="5.8" y="14" width="1.8" height="1.6"></rect></g></svg>
<span class="t" style="left: 51.7px; top: 523.9px; font-size: 12px; color: rgb(30, 30, 30); letter-spacing: -0.121px;">ListView</span>
<svg style="left:21px;top:544.8px;" width="15" height="15" viewBox="0 0 16 16"><text x="8" y="12" font-size="11" text-anchor="middle" fill="#3b3f52" font-family="Liberation Sans, sans-serif">(.)</text></svg>
<span class="t" style="left: 51.7px; top: 544.8px; font-size: 12px; color: rgb(30, 30, 30); letter-spacing: 0.023px;">MaskedTextBox</span>
</div>
<div style="left:10px;top:699px;width:224px;height:21px;background:#40568d;"></div>
<span class="t" style="left: 14px; top: 701.5px; font-size: 13px; color: rgb(255, 255, 255); letter-spacing: -0.73px;">Data Sources</span>
<svg style="left:184px;top:707.5px;" width="8" height="5" viewBox="0 0 8 5"><path d="M0 0 H8 L4 4.6 Z" fill="#d5dcf1"></path></svg>
<svg style="left:201px;top:703.5px;" width="8" height="12" viewBox="0 0 8 12"><path d="M2 0.6 H6 M2.4 0.6 V6.4 M5.4 0.6 V6.4 M0.4 6.6 H7.6 M4 6.6 V11.6" fill="none" stroke="#d5dcf1" stroke-width="1.1"></path><path d="M4.6 0.6 H5.9 V6.4 H4.6 Z" fill="#d5dcf1"></path></svg>
<svg style="left:217px;top:704.5px;" width="10" height="10" viewBox="0 0 10 10"><path d="M0.7 0.7 L9.3 9.3 M9.3 0.7 L0.7 9.3" stroke="#d5dcf1" stroke-width="1.2"></path></svg>
<div style="left:10px;top:720px;width:224px;height:25px;background:#c3cdeb;"></div>
<div style="left:10px;top:745px;width:224px;height:9px;background:#e6e8ef;"></div>
<svg style="left:17px;top:724px;" width="17" height="17" viewBox="0 0 17 17"><path d="M3.5 0.5 V6.5 M0.5 3.5 H6.5" stroke="#aab3d2" stroke-width="1"></path><path d="M7 7.5 C7 6 14.5 6 14.5 7.5 V14 C14.5 15.5 7 15.5 7 14 Z" fill="none" stroke="#aab3d2" stroke-width="1.1"></path></svg>
<svg style="left:38px;top:724px;" width="18" height="17" viewBox="0 0 18 17"><path d="M2 2 H12 V6 M2 5 H10 M2 8 H9 M2 11 H6 M1 2 V13 H5" fill="none" stroke="#aab3d2" stroke-width="1.3"></path><path d="M8 14.5 L15 7.5 L16.5 9 L9.5 16 H8 Z" fill="#aab3d2"></path></svg>
<svg style="left:60px;top:724px;" width="17" height="17" viewBox="0 0 17 17"><path d="M3.5 0.5 V6.5 M0.5 3.5 H6.5" stroke="#aab3d2" stroke-width="1"></path><path d="M7 5 H14.5 V14.5 H5.5 V8.5" fill="none" stroke="#aab3d2" stroke-width="1.1"></path><path d="M11 2.5 C13 3 14 4 14.5 5.5" fill="none" stroke="#aab3d2" stroke-width="1"></path></svg>
<svg style="left:82px;top:724px;" width="16" height="17" viewBox="0 0 16 17"><path d="M10.5 2.8 A6 6 0 1 1 5.5 2.8" fill="none" stroke="#aab3d2" stroke-width="1.2"></path><path d="M10 0.5 L10.8 3.2 L8 4" fill="none" stroke="#aab3d2" stroke-width="1"></path></svg>
<div style="left:242px;top:95px;width:161px;height:22px;background:#cdd5f0;"></div>
<span class="t" style="left: 246.5px; top: 98px; font-size: 12.5px; color: rgb(26, 47, 102); font-weight: bold; letter-spacing: -0.256px;">Form1.vb [Design]*</span>
<svg style="left:368px;top:101px;" width="10" height="10" viewBox="0 0 10 10"><path d="M0.5 5 H3.5 M3.5 2 V8 M3.5 3 H8 M3.5 7 H8 M8.6 1.6 V8.4" fill="none" stroke="#7380a8" stroke-width="1.1"></path></svg>
<svg style="left:387px;top:101px;" width="10" height="10" viewBox="0 0 10 10"><path d="M0.8 0.8 L9.2 9.2 M9.2 0.8 L0.8 9.2" stroke="#7380a8" stroke-width="1.2"></path></svg>
<svg style="left:1153px;top:104.5px;" width="8" height="5" viewBox="0 0 8 5"><path d="M0 0 H8 L4 4.6 Z" fill="#e3e8f6"></path></svg>
<svg style="left:1170.5px;top:100.3px;" width="10" height="10" viewBox="0 0 12 12"><g fill="#e3e8f6"><circle cx="6" cy="6" r="3.9"></circle><rect x="5" y="0.3" width="2" height="11.4"></rect><rect x="0.3" y="5" width="11.4" height="2"></rect><rect x="5" y="0.3" width="2" height="11.4" transform="rotate(45 6 6)"></rect><rect x="5" y="0.3" width="2" height="11.4" transform="rotate(-45 6 6)"></rect></g><circle cx="6" cy="6" r="1.7" fill="#5d6b99"></circle></svg>
<div style="left:403px;top:115.5px;width:779px;height:3px;background:#f6f6fa;"></div>
<div style="left:242px;top:117px;width:940px;height:585px;background:#f6f6fa;"></div>
<div style="left:257px;top:132px;width:657px;height:399px;border:1px solid #4a5566;border-radius:6px 6px 0 0;background:#bcd2ed;overflow:hidden;"><div style="left:0;top:0;width:655px;height:31px;background:linear-gradient(#98b5d9,#a6c1e2 45%,#b7cfeb);"></div><div style="left:0;top:0;width:655px;height:1px;background:#d3e2f3;"></div></div>
<div style="left:257px;top:524px;width:657px;height:7px;background:#bcd2ed;border:1px solid #4a5566;border-top:none;border-right-color:#14305a;border-bottom-color:#2e4257;"></div>
<div style="left:258px;top:529px;width:655px;height:1px;background:#8fd3f2;"></div>
<div style="left:264px;top:163px;width:643px;height:361px;background:#f0eff1;"></div>
<div style="left:906px;top:164px;width:1px;height:360px;background:#cfe2f6;"></div>
<div style="left:913px;top:139px;width:1px;height:392px;background:#14305a;"></div>
<svg style="left:267px;top:143.5px;" width="14" height="14" viewBox="0 0 14 14"><rect x="0.5" y="4" width="5" height="8.5" fill="#3d434f" stroke="#e9eef6" stroke-width="0.8"></rect><rect x="5.8" y="0.8" width="7.4" height="8.4" fill="#3d434f" stroke="#e9eef6" stroke-width="0.8"></rect><rect x="6" y="9" width="5.6" height="4.2" fill="#3d434f" stroke="#e9eef6" stroke-width="0.8"></rect></svg>
<span class="t" style="left: 285.5px; top: 143.5px; font-size: 12px; color: rgb(30, 30, 30); letter-spacing: -0.234px;">Form1</span>
<div style="left:801.2px;top:141.5px;width:33px;height:19px;border:1px solid #7f97ba;border-radius:2.5px;background:linear-gradient(#c3d5ec,#b2c8e4 48%,#9fb9db 52%,#b3cae7);box-shadow:inset 0 0 0 1px rgba(255,255,255,.45);"></div>
<svg style="left:801.2px;top:141.5px;" width="33" height="19" viewBox="0 0 33 19"><rect x="9" y="8" width="13.5" height="4.2" rx="0.8" fill="#fff" stroke="#5d6f8b" stroke-width="0.8"></rect></svg>
<div style="left:836.4px;top:141.5px;width:33px;height:19px;border:1px solid #7f97ba;border-radius:2.5px;background:linear-gradient(#c3d5ec,#b2c8e4 48%,#9fb9db 52%,#b3cae7);box-shadow:inset 0 0 0 1px rgba(255,255,255,.45);"></div>
<svg style="left:836.4px;top:141.5px;" width="33" height="19" viewBox="0 0 33 19"><rect x="9.8" y="3" width="12.8" height="12" rx="0.8" fill="#fff" stroke="#5d6f8b" stroke-width="0.8"></rect><rect x="13" y="6.3" width="6.4" height="5.2" fill="#a9c0de" stroke="#5d6f8b" stroke-width="0.8"></rect></svg>
<div style="left:871.5px;top:141.5px;width:33.3px;height:19px;border:1px solid #8a4a3e;border-radius:2.5px;background:linear-gradient(#e8a892,#d87a60 46%,#c9431f 52%,#d96b45);box-shadow:inset 0 0 0 1px rgba(255,255,255,.45);"></div>
<svg style="left:871.5px;top:141.5px;" width="33.3" height="19" viewBox="0 0 33.3 19"><path d="M12 3.2 L16.5 7 L21 3.2 L23.3 5.4 L19 9.2 L23.3 13 L21 15.2 L16.5 11.4 L12 15.2 L9.7 13 L14 9.2 L9.7 5.4 Z" fill="#fff" stroke="#7a4036" stroke-width="0.7" stroke-linejoin="round"></path></svg>
<div style="left:465.5px;top:270.5px;width:226px;height:41px;background:#e1e0e2;border:1px solid #b9b9bb;"></div>
<span class="t" style="left: 568.3px; top: 283.7px; font-size: 12px; color: rgb(30, 30, 30); letter-spacing: -0.605px;">Red</span>
<div style="left:462px;top:267px;width:234px;height:49px;background:transparent;border:1px dotted #7a7a7a;"></div>
<div style="left:458.9px;top:264.09999999999997px;width:7.2px;height:7.2px;background:#fff;border:1.2px solid #2b2b2b;border-radius:1.8px;"></div>
<div style="left:458.9px;top:288.4px;width:7.2px;height:7.2px;background:#fff;border:1.2px solid #2b2b2b;border-radius:1.8px;"></div>
<div style="left:458.9px;top:311.7px;width:7.2px;height:7.2px;background:#fff;border:1.2px solid #2b2b2b;border-radius:1.8px;"></div>
<div style="left:575.4px;top:264.09999999999997px;width:7.2px;height:7.2px;background:#fff;border:1.2px solid #2b2b2b;border-radius:1.8px;"></div>
<div style="left:575.4px;top:311.7px;width:7.2px;height:7.2px;background:#fff;border:1.2px solid #2b2b2b;border-radius:1.8px;"></div>
<div style="left:691.9px;top:264.09999999999997px;width:7.2px;height:7.2px;background:#fff;border:1.2px solid #2b2b2b;border-radius:1.8px;"></div>
<div style="left:691.9px;top:288.4px;width:7.2px;height:7.2px;background:#fff;border:1.2px solid #2b2b2b;border-radius:1.8px;"></div>
<div style="left:691.9px;top:311.7px;width:7.2px;height:7.2px;background:#fff;border:1.2px solid #2b2b2b;border-radius:1.8px;"></div>
<svg style="left:752.3px;top:419.2px;" width="12" height="17" viewBox="0 0 12 17"><path d="M1 1 V12.6 L3.8 10 L5.8 14.8 L8 13.8 L6 9.2 H9.8 Z" fill="#fff" stroke="#333" stroke-width="0.9" stroke-linejoin="round"></path></svg>
<div style="left:1190px;top:96px;width:347px;height:21px;background:#40568d;"></div>
<span class="t" style="left: 1193.5px; top: 98.5px; font-size: 13px; color: rgb(255, 255, 255); letter-spacing: -0.471px;">Solution Explorer</span>
<svg style="left:1487px;top:104.5px;" width="8" height="5" viewBox="0 0 8 5"><path d="M0 0 H8 L4 4.6 Z" fill="#d5dcf1"></path></svg>
<svg style="left:1504px;top:100.5px;" width="8" height="12" viewBox="0 0 8 12"><path d="M2 0.6 H6 M2.4 0.6 V6.4 M5.4 0.6 V6.4 M0.4 6.6 H7.6 M4 6.6 V11.6" fill="none" stroke="#d5dcf1" stroke-width="1.1"></path><path d="M4.6 0.6 H5.9 V6.4 H4.6 Z" fill="#d5dcf1"></path></svg>
<svg style="left:1520px;top:101.5px;" width="10" height="10" viewBox="0 0 10 10"><path d="M0.7 0.7 L9.3 9.3 M9.3 0.7 L0.7 9.3" stroke="#d5dcf1" stroke-width="1.2"></path></svg>
<div style="left:1190px;top:117px;width:347px;height:27.5px;background:#cdd6f1;"></div>
<div style="left:1190px;top:144.4px;width:347px;height:208.6px;background:#f6f7fc;"></div>
<svg style="left:1195px;top:121px;" width="18" height="18" viewBox="0 0 18 18"><path d="M8 2.5 H15.5 V13 H11" fill="none" stroke="#30344a" stroke-width="1.2"></path><path d="M10 5.5 H13.5 M10 8 H13.5 M11 10.5 H13.5" stroke="#30344a" stroke-width="1"></path><path d="M7.4 8 L9.4 9 V15.4 L7.4 16.4 L3.6 13 L2 14.2 L1 13.7 V10.7 L2 10.2 L3.6 11.4 Z M7.4 10.4 L5.2 12.2 L7.4 14 Z" fill="#7a4bc2" fill-rule="evenodd"></path></svg>
<div style="left:1219.5px;top:120px;width:1px;height:21px;background:#aab4d6;"></div>
<svg style="left:1226px;top:120px;" width="18" height="20" viewBox="0 0 18 20"><circle cx="9.5" cy="11.5" r="5.6" fill="none" stroke="#30344a" stroke-width="1.2"></circle><path d="M9.5 8 V11.8 H12.4" fill="none" stroke="#30344a" stroke-width="1.1"></path><path d="M0.5 0.5 H6.5 L3.5 4 Z" fill="#2f66b8"></path></svg>
<svg style="left:1248.5px;top:129px;" width="7" height="4" viewBox="0 0 7 4"><path d="M0 0 H7 L3.5 4 Z" fill="#1e1e1e"></path></svg>
<svg style="left:1261px;top:123px;" width="15" height="14" viewBox="0 0 15 14"><path d="M14 4.5 H1.5 M5 1 L1.5 4.5 M1 9.5 H13.5 M10 13 L13.5 9.5" fill="none" stroke="#30344a" stroke-width="1.3"></path></svg>
<svg style="left:1282px;top:122px;" width="16" height="16" viewBox="0 0 16 16"><rect x="1" y="1" width="14" height="14" rx="1.5" fill="none" stroke="#30344a" stroke-width="1.2"></rect><path d="M4 8 H12" stroke="#30344a" stroke-width="1.2"></path></svg>
<svg style="left:1304px;top:122px;" width="16" height="16" viewBox="0 0 16 16"><rect x="5.5" y="1" width="9.5" height="10" fill="none" stroke="#30344a" stroke-width="1.2"></rect><rect x="1" y="5" width="9.5" height="10" fill="#cfd8f2" stroke="#30344a" stroke-width="1.2"></rect><path d="M4 8.5 H7.5 V12" fill="none" stroke="#30344a" stroke-width="1"></path></svg>
<div style="left:1326.5px;top:120px;width:1px;height:21px;background:#aab4d6;"></div>
<div style="left:1331px;top:119px;width:23px;height:22px;background:#fbe7b4;border:1px solid #d9ad4e;"></div>
<svg style="left:1334px;top:121.5px;" width="17" height="17" viewBox="0 0 17 17"><rect x="1.5" y="1.5" width="3.4" height="3.4" fill="none" stroke="#30344a" stroke-width="1.2"></rect><rect x="6.5" y="6.5" width="3.4" height="3.4" fill="none" stroke="#30344a" stroke-width="1.2"></rect><rect x="11.5" y="11.5" width="3.6" height="3.6" fill="none" stroke="#30344a" stroke-width="1.2"></rect><path d="M3.2 5 V8.2 H6.4 M8.2 10 V13.3 H11.4" fill="none" stroke="#30344a" stroke-width="1" stroke-dasharray="1.2 1"></path></svg>
<svg style="left:1354.5px;top:129px;" width="7" height="4" viewBox="0 0 7 4"><path d="M0 0 H7 L3.5 4 Z" fill="#1e1e1e"></path></svg>
<div style="left:1367px;top:120px;width:1px;height:21px;background:#aab4d6;"></div>
<svg style="left:1374px;top:121px;" width="17" height="17" viewBox="0 0 17 17"><path d="M14.8 3.4 L12 6.2 L10.4 4.6 L13.2 1.8 C11 0.8 8.2 2.2 8.6 5.6 L1.6 12.8 C0.6 14.6 2.6 16.4 4.2 15.2 L11.2 8 C14.4 8.6 16 5.6 14.8 3.4 Z" fill="#30344a"></path></svg>
<div style="left:1394px;top:119px;width:23px;height:22px;background:#fbe7b4;border:1px solid #d9ad4e;"></div>
<svg style="left:1397px;top:121.5px;" width="17" height="17" viewBox="0 0 17 17"><rect x="2" y="8.5" width="9" height="3.5" fill="none" stroke="#30344a" stroke-width="1.2"></rect><path d="M1 13.6 H13" stroke="#30344a" stroke-width="1.2"></path><path d="M12.5 6.5 L14.8 4.6 M13.2 8.8 H15.8 M10.8 5.6 V3.4" stroke="#c08a1e" stroke-width="1.1"></path></svg>
<div style="left:1191.5px;top:144.4px;width:343px;height:21px;background:#fdfdfe;border:1px solid #b4bcd6;border-bottom-color:#8791ae;"></div>
<span class="t" style="left: 1196.7px; top: 148px; font-size: 12px; color: rgb(118, 118, 118); letter-spacing: -0.108px;">Search Solution Explorer (Ctrl+;)</span>
<svg style="left:1507px;top:147.5px;" width="13" height="14" viewBox="0 0 13 14"><circle cx="8" cy="5" r="3.8" fill="none" stroke="#3a3f55" stroke-width="1.5"></circle><path d="M5.2 7.8 L1 12.6" stroke="#3a3f55" stroke-width="1.8"></path></svg>
<div style="left:1522.5px;top:144.4px;width:1px;height:21px;background:#5a607a;"></div>
<svg style="left:1526.5px;top:154.5px;" width="6" height="4" viewBox="0 0 6 4"><path d="M0 0 H6 L3 3.6 Z" fill="#1e1e1e"></path></svg>
<svg style="left:1204px;top:170px;" width="17" height="16" viewBox="0 0 17 16"><path d="M1.5 12 V1.5 H15 V11" fill="none" stroke="#5b607a" stroke-width="1.2"></path><path d="M1.5 2.6 H15" stroke="#5b607a" stroke-width="2"></path><path d="M12.4 6.4 L14.6 7.4 V14.4 L12.4 15.4 L8.2 11.8 L6.4 13.2 L5.4 12.7 V9.1 L6.4 8.6 L8.2 10 Z M12.4 9 L10 10.9 L12.4 12.8 Z" fill="#7a4bc2" fill-rule="evenodd"></path></svg>
<span class="t" style="left: 1225px; top: 170px; font-size: 12px; color: rgb(30, 30, 30); letter-spacing: -0.079px;">Solution 'Project_Change_Colors' (1 of 1 project)</span>
<div style="left:1190px;top:187.5px;width:347px;height:19px;background:#e7e9f1;"></div>
<svg style="left:1200.5px;top:194.0px;" width="7" height="7" viewBox="0 0 7 7"><path d="M6.5 0.5 V6.5 H0.5 Z" fill="#1e1e1e"></path></svg>
<svg style="left:1223px;top:190.5px;" width="15" height="14" viewBox="0 0 15 14"><rect x="0.6" y="0.6" width="13.8" height="12.8" fill="#dbe7f7" stroke="#5f7fae" stroke-width="1.1"></rect><text x="7.5" y="10.2" font-size="7.5" font-weight="bold" text-anchor="middle" fill="#3b6fb5" font-family="Liberation Sans, sans-serif">VB</text></svg>
<span class="t" style="left: 1243.7px; top: 189.5px; font-size: 12px; color: rgb(17, 17, 17); font-weight: bold; letter-spacing: -0.502px;">Project_Change_Colors</span>
<svg style="left:1218.5px;top:211.5px;" width="6" height="10" viewBox="0 0 6 10"><path d="M0.8 0.9 L5.2 5 L0.8 9.1 Z" fill="none" stroke="#1e1e1e" stroke-width="1.1"></path></svg>
<svg style="left:1239.5px;top:210px;" width="17" height="13" viewBox="0 0 17 13"><rect x="9" y="1" width="7" height="8.5" rx="1" fill="none" stroke="#30344a" stroke-width="1.3"></rect><path d="M9 5.2 H16" stroke="#30344a" stroke-width="1.2"></path><rect x="1.2" y="4" width="5" height="5.4" rx="1" fill="none" stroke="#30344a" stroke-width="1.3"></rect><path d="M0.5 10.8 L4 6.5 M6 6.5 H9" stroke="#30344a" stroke-width="1.1"></path></svg>
<span class="t" style="left: 1261.6px; top: 208.5px; font-size: 12px; color: rgb(30, 30, 30); letter-spacing: -0.145px;">Dependencies</span>
<svg style="left:1240px;top:227.5px;" width="17" height="16" viewBox="0 0 17 16"><path d="M3.5 1.5 H9 L10.5 3 H15.5 V13 H3.5 Z" fill="#dcb765" stroke="#a9853a" stroke-width="0.9"></path><path d="M1.4 6.4 C2 4.4 4.6 3.8 6 5.2 L4.2 7 L5.2 8.2 L7.2 6.6 C8 8.6 6.6 10.4 4.8 10.2 L9 14.4 L7.4 15.6 L3.2 11.2 C1.6 10.6 0.8 8.2 1.4 6.4 Z" fill="#2b2f42"></path></svg>
<span class="t" style="left: 1261.6px; top: 227.6px; font-size: 12px; color: rgb(30, 30, 30); letter-spacing: -0.069px;">My Project</span>
<svg style="left:1218.5px;top:249.8px;" width="6" height="10" viewBox="0 0 6 10"><path d="M0.8 0.9 L5.2 5 L0.8 9.1 Z" fill="none" stroke="#1e1e1e" stroke-width="1.1"></path></svg>
<span class="t" style="left: 1241.5px; top: 246.8px; font-size: 11.5px; color: rgb(47, 127, 208); font-weight: bold; letter-spacing: -1.242px;">VB</span>
<span class="t" style="left: 1261.6px; top: 246.8px; font-size: 12px; color: rgb(30, 30, 30); letter-spacing: -0.02px;">ApplicationEvents.vb</span>
<svg style="left:1219px;top:270.5px;" width="7" height="7" viewBox="0 0 7 7"><path d="M6.5 0.5 V6.5 H0.5 Z" fill="#1e1e1e"></path></svg>
<svg style="left:1240px;top:266px;" width="16" height="16" viewBox="0 0 16 16"><rect x="1.2" y="1.5" width="13.6" height="13" fill="none" stroke="#5b607a" stroke-width="1.2"></rect><path d="M1.2 3 H14.8" stroke="#5b607a" stroke-width="2.4"></path><path d="M3.5 7.2 H12.5" stroke="#5b607a" stroke-width="1.2"></path><rect x="3.6" y="9.4" width="3.6" height="3" fill="none" stroke="#7a4bc2" stroke-width="1.1"></rect><rect x="9" y="9.4" width="3.6" height="3" fill="#9aa0b8"></rect></svg>
<span class="t" style="left: 1261.6px; top: 266px; font-size: 12px; color: rgb(30, 30, 30); letter-spacing: -0.273px;">Form1.vb</span>
<svg style="left:1237px;top:288.5px;" width="6" height="10" viewBox="0 0 6 10"><path d="M0.8 0.9 L5.2 5 L0.8 9.1 Z" fill="none" stroke="#1e1e1e" stroke-width="1.1"></path></svg>
<span class="t" style="left: 1260.5px; top: 285.5px; font-size: 11.5px; color: rgb(47, 127, 208); font-weight: bold; letter-spacing: -1.242px;">VB</span>
<span class="t" style="left: 1279.6px; top: 285.5px; font-size: 12px; color: rgb(30, 30, 30); letter-spacing: -0.199px;">Form1.Designer.vb</span>
<svg style="left:1260px;top:305.5px;" width="14" height="15" viewBox="0 0 14 15"><path d="M4.5 3.5 V1 H10 L13 4 V11.5 H9.5" fill="none" stroke="#30344a" stroke-width="1.1"></path><path d="M1 3.8 H6.5 L9.4 6.6 V14.2 H1 Z" fill="#e8ebf5" stroke="#30344a" stroke-width="1.1"></path><path d="M3 8 L5.5 10.4 M5.5 8 L3 10.4" stroke="#30344a" stroke-width="0.9"></path></svg>
<span class="t" style="left: 1279.6px; top: 304.8px; font-size: 12px; color: rgb(30, 30, 30); letter-spacing: -0.419px;">Form1.resx</span>
<div style="left:1190px;top:353px;width:101px;height:19px;background:#f2f4fb;"></div>
<span class="t" style="left: 1195px; top: 355px; font-size: 12.5px; color: rgb(30, 30, 30); letter-spacing: -0.277px;">Solution Explorer</span>
<div style="left:1291px;top:353px;width:74px;height:19px;background:#40568d;"></div>
<span class="t" style="left: 1297.5px; top: 355px; font-size: 12.5px; color: rgb(255, 255, 255); letter-spacing: -0.544px;">Git Changes</span>
<div style="left:1190px;top:380px;width:347px;height:21px;background:#f8cc85;"></div>
<span class="t" style="left: 1193.5px; top: 382.5px; font-size: 13px; color: rgb(42, 42, 42); letter-spacing: -0.575px;">Properties</span>
<svg style="left:1487px;top:388.5px;" width="8" height="5" viewBox="0 0 8 5"><path d="M0 0 H8 L4 4.6 Z" fill="#3b3b3b"></path></svg>
<svg style="left:1504px;top:384.5px;" width="8" height="12" viewBox="0 0 8 12"><path d="M2 0.6 H6 M2.4 0.6 V6.4 M5.4 0.6 V6.4 M0.4 6.6 H7.6 M4 6.6 V11.6" fill="none" stroke="#3b3b3b" stroke-width="1.1"></path><path d="M4.6 0.6 H5.9 V6.4 H4.6 Z" fill="#3b3b3b"></path></svg>
<svg style="left:1520px;top:385.5px;" width="10" height="10" viewBox="0 0 10 10"><path d="M0.7 0.7 L9.3 9.3 M9.3 0.7 L0.7 9.3" stroke="#3b3b3b" stroke-width="1.2"></path></svg>
<div style="left:1190px;top:401px;width:347px;height:23.5px;background:#f5f7fd;"></div>
<span class="t" style="left: 1197px; top: 405px; font-size: 12px; color: rgb(17, 17, 17); font-weight: bold; letter-spacing: -0.075px;">Button1</span>
<span class="t" style="left: 1249.6px; top: 405px; font-size: 12px; color: rgb(30, 30, 30); letter-spacing: -0.255px;">System.Windows.Forms.Button</span>
<svg style="left:1526px;top:411.5px;" width="7" height="4" viewBox="0 0 7 4"><path d="M0 0 H7 L3.5 4 Z" fill="#1e1e1e"></path></svg>
<div style="left:1190px;top:424.5px;width:347px;height:25px;background:#cdd6f0;"></div>
<div style="left:1192.5px;top:425px;width:23px;height:23px;background:#fbe7b4;border:1px solid #d9ad4e;"></div>
<svg style="left:1196px;top:428.5px;" width="16" height="16" viewBox="0 0 16 16"><rect x="1.2" y="1.2" width="3.4" height="3.4" fill="none" stroke="#30344a" stroke-width="1.2"></rect><rect x="1.2" y="10.2" width="3.4" height="3.4" fill="none" stroke="#30344a" stroke-width="1.2"></rect><path d="M6.5 1.6 H15 M8 4.6 H15 M8 7.4 H14 M6.5 10.6 H15 M8 13.6 H14" stroke="#30344a" stroke-width="1.3"></path></svg>
<svg style="left:1219px;top:427.5px;" width="18" height="18" viewBox="0 0 18 18"><text x="0" y="8" font-size="9" font-weight="bold" fill="#30344a" font-family="Liberation Sans, sans-serif">A</text><text x="0.4" y="17" font-size="9" font-weight="bold" fill="#30344a" font-family="Liberation Sans, sans-serif">Z</text><path d="M12.8 2.5 V12" stroke="#2461b5" stroke-width="2.4"></path><path d="M8.8 9.4 L12.8 14.8 L16.8 9.4 Z" fill="#2461b5"></path></svg>
<div style="left:1244px;top:425px;width:23px;height:23px;background:#fbe7b4;border:1px solid #d9ad4e;"></div>
<svg style="left:1247.5px;top:428px;" width="16" height="17" viewBox="0 0 16 17"><path d="M5 1.5 H10.5 L14.5 5.5 V15.5 H2.5 V8" fill="none" stroke="#30344a" stroke-width="1.2"></path><path d="M10.5 1.5 V5.5 H14.5" fill="none" stroke="#30344a" stroke-width="1"></path><path d="M5.6 3.4 C3.6 3 1.8 4.6 2.4 6.6 L4 5.2 L5.4 6.6 L4 8 C6 8.6 7.8 7 7.4 5 L7 8.4 L7.6 13.4 L5.8 13.4 Z" fill="#30344a"></path></svg>
<svg style="left:1272px;top:427px;" width="14" height="19" viewBox="0 0 14 19"><path d="M7.5 0.5 L1.5 10 H6 L3.5 18 L12.5 7 H7.8 L11.5 0.5 Z" fill="#e8a422" stroke="#c27d10" stroke-width="0.7"></path></svg>
<div style="left:1293px;top:427px;width:1px;height:20px;background:#aab4d6;"></div>
<svg style="left:1299px;top:429px;" width="16" height="16" viewBox="0 0 16 16"><path d="M14 3.2 L11.3 5.9 L9.8 4.4 L12.5 1.7 C10.4 0.8 7.8 2.2 8.2 5.3 L1.5 12.2 C0.6 13.9 2.5 15.6 4 14.5 L10.7 7.6 C13.7 8.2 15.2 5.3 14 3.2 Z" fill="#a3a9bf"></path></svg>
<div style="left:1190px;top:449px;width:347px;height:305px;background:#f9fafe;"></div>
<div style="left:1190px;top:449px;width:14px;height:305px;background:#f0f1f7;"></div>
<div style="left:1334px;top:449px;width:1px;height:305px;background:#f0f1f7;"></div>
<div style="left:1204px;top:469.3px;width:316px;height:1px;background:#f3f4f9;"></div>
<span class="t" style="left: 1208px; top: 453.2px; font-size: 12px; color: rgb(30, 30, 30); letter-spacing: 0.095px;">ImageAlign</span>
<span class="t" style="left: 1337.5px; top: 453.2px; font-size: 12px; color: rgb(30, 30, 30); letter-spacing: 0.019px;">MiddleCenter</span>
<div style="left:1204px;top:487.7px;width:316px;height:1px;background:#f3f4f9;"></div>
<span class="t" style="left: 1208px; top: 471.6px; font-size: 12px; color: rgb(30, 30, 30); letter-spacing: -0.072px;">ImageIndex</span>
<div style="left:1335px;top:471.0px;width:21px;height:15.5px;background:#ffffff;border:1px solid #2b2b2b;"></div>
<span class="t" style="left: 1362.5px; top: 471.6px; font-size: 12px; color: rgb(30, 30, 30); letter-spacing: -0.198px;">(none)</span>
<div style="left:1204px;top:506.2px;width:316px;height:1px;background:#f3f4f9;"></div>
<span class="t" style="left: 1208px; top: 490.1px; font-size: 12px; color: rgb(30, 30, 30); letter-spacing: -0.229px;">ImageKey</span>
<div style="left:1335px;top:489.5px;width:21px;height:15.5px;background:#ffffff;border:1px solid #2b2b2b;"></div>
<span class="t" style="left: 1362.5px; top: 490.1px; font-size: 12px; color: rgb(30, 30, 30); letter-spacing: -0.198px;">(none)</span>
<div style="left:1204px;top:524.6px;width:316px;height:1px;background:#f3f4f9;"></div>
<span class="t" style="left: 1208px; top: 508.5px; font-size: 12px; color: rgb(30, 30, 30); letter-spacing: -0.181px;">ImageList</span>
<span class="t" style="left: 1337.5px; top: 508.5px; font-size: 12px; color: rgb(30, 30, 30); letter-spacing: -0.198px;">(none)</span>
<div style="left:1204px;top:543.1px;width:316px;height:1px;background:#f3f4f9;"></div>
<span class="t" style="left: 1208px; top: 527px; font-size: 12px; color: rgb(30, 30, 30); letter-spacing: 0.027px;">RightToLeft</span>
<span class="t" style="left: 1337.5px; top: 527px; font-size: 12px; color: rgb(30, 30, 30); letter-spacing: 0.078px;">No</span>
<div style="left:1204px;top:561.5px;width:316px;height:1px;background:#f3f4f9;"></div>
<div style="left:1204px;top:543.6px;width:130px;height:18.4px;background:#0a74d9;"></div>
<span class="t" style="left: 1208px; top: 545.4px; font-size: 13px; color: rgb(255, 255, 255); letter-spacing: -0.336px;">Text</span>
<span class="t" style="left: 1337.5px; top: 545.4px; font-size: 12px; color: rgb(17, 17, 17); font-weight: bold; letter-spacing: -0.557px;">Red</span>
<div style="left:1503px;top:543.9px;width:17px;height:17.6px;background:#e9e9ed;border:1px solid #b9b9c2;"></div>
<svg style="left:1507.5px;top:550.3px;" width="8" height="5" viewBox="0 0 8 5"><path d="M0.6 0.6 L4 4 L7.4 0.6" fill="none" stroke="#555" stroke-width="1.1"></path></svg>
<div style="left:1204px;top:579.9px;width:316px;height:1px;background:#f3f4f9;"></div>
<span class="t" style="left: 1208px; top: 563.8px; font-size: 12px; color: rgb(30, 30, 30); letter-spacing: 0.011px;">TextAlign</span>
<span class="t" style="left: 1337.5px; top: 563.8px; font-size: 12px; color: rgb(30, 30, 30); letter-spacing: 0.019px;">MiddleCenter</span>
<div style="left:1204px;top:598.4px;width:316px;height:1px;background:#f3f4f9;"></div>
<span class="t" style="left: 1208px; top: 582.3px; font-size: 12px; color: rgb(30, 30, 30); letter-spacing: -0.035px;">TextImageRelation</span>
<span class="t" style="left: 1337.5px; top: 582.3px; font-size: 12px; color: rgb(30, 30, 30); letter-spacing: -0.263px;">Overlay</span>
<div style="left:1204px;top:616.8px;width:316px;height:1px;background:#f3f4f9;"></div>
<span class="t" style="left: 1208px; top: 600.7px; font-size: 12px; color: rgb(30, 30, 30); letter-spacing: -0.182px;">UseMnemonic</span>
<span class="t" style="left: 1337.5px; top: 600.7px; font-size: 12px; color: rgb(30, 30, 30); letter-spacing: -0.684px;">True</span>
<div style="left:1204px;top:635.3px;width:316px;height:1px;background:#f3f4f9;"></div>
<span class="t" style="left: 1208px; top: 619.2px; font-size: 12px; color: rgb(30, 30, 30); letter-spacing: -0.325px;">UseVisualStyleBackColo</span>
<span class="t" style="left: 1337.5px; top: 619.2px; font-size: 12px; color: rgb(17, 17, 17); font-weight: bold; letter-spacing: -0.411px;">True</span>
<div style="left:1204px;top:653.7px;width:316px;height:1px;background:#f3f4f9;"></div>
<span class="t" style="left: 1208px; top: 637.6px; font-size: 12px; color: rgb(30, 30, 30); letter-spacing: -0.324px;">UseWaitCursor</span>
<span class="t" style="left: 1337.5px; top: 637.6px; font-size: 12px; color: rgb(30, 30, 30); letter-spacing: -0.869px;">False</span>
<div style="left:1190px;top:654.2px;width:330px;height:18.4px;background:#eeeff4;"></div>
<svg style="left:1193px;top:658.4px;" width="9" height="9" viewBox="0 0 9 9"><rect x="0.5" y="0.5" width="8" height="8" fill="#fff" stroke="#555" stroke-width="1"></rect><path d="M2.2 4.5 H6.8" stroke="#222" stroke-width="1"></path></svg>
<span class="t" style="left: 1208px; top: 656px; font-size: 12px; color: rgb(17, 17, 17); font-weight: bold; letter-spacing: -0.307px;">Behavior</span>
<div style="left:1204px;top:690.6px;width:316px;height:1px;background:#f3f4f9;"></div>
<span class="t" style="left: 1208px; top: 674.5px; font-size: 12px; color: rgb(30, 30, 30); letter-spacing: 0.268px;">AllowDrop</span>
<span class="t" style="left: 1337.5px; top: 674.5px; font-size: 12px; color: rgb(30, 30, 30); letter-spacing: -0.869px;">False</span>
<div style="left:1204px;top:709.0px;width:316px;height:1px;background:#f3f4f9;"></div>
<span class="t" style="left: 1208px; top: 692.9px; font-size: 12px; color: rgb(30, 30, 30); letter-spacing: -0.061px;">AutoEllipsis</span>
<span class="t" style="left: 1337.5px; top: 692.9px; font-size: 12px; color: rgb(30, 30, 30); letter-spacing: -0.869px;">False</span>
<div style="left:1204px;top:727.5px;width:316px;height:1px;background:#f3f4f9;"></div>
<span class="t" style="left: 1208px; top: 711.4px; font-size: 12px; color: rgb(30, 30, 30); letter-spacing: -0.065px;">ContextMenuStrip</span>
<span class="t" style="left: 1337.5px; top: 711.4px; font-size: 12px; color: rgb(30, 30, 30); letter-spacing: -0.131px;">(none)</span>
<div style="left:1204px;top:745.9px;width:316px;height:1px;background:#f3f4f9;"></div>
<span class="t" style="left: 1208px; top: 729.8px; font-size: 12px; color: rgb(30, 30, 30); letter-spacing: -0.004px;">DialogResult</span>
<span class="t" style="left: 1337.5px; top: 729.8px; font-size: 12px; color: rgb(30, 30, 30); letter-spacing: -0.172px;">None</span>
<div style="left:1204px;top:764.3px;width:316px;height:1px;background:#f3f4f9;"></div>
<span class="t" style="left: 1208px; top: 748.2px; font-size: 12px; color: rgb(30, 30, 30); letter-spacing: -0.15px;">Enabled</span>
<span class="t" style="left: 1337.5px; top: 748.2px; font-size: 12px; color: rgb(30, 30, 30); letter-spacing: -0.684px;">True</span>
<div style="left:1520px;top:449.5px;width:17px;height:305px;background:#e9eaef;"></div>
<div style="left:1524px;top:536px;width:9px;height:77px;background:#c2c3c9;"></div>
<svg style="left:1524px;top:457px;" width="9" height="5" viewBox="0 0 9 5"><path d="M0 5 L4.5 0 L9 5 Z" fill="#868999"></path></svg>
<svg style="left:1524px;top:746px;" width="9" height="5" viewBox="0 0 9 5"><path d="M0 0 L4.5 5 L9 0 Z" fill="#868999"></path></svg>
<svg style="left:1280px;top:540px;" width="120" height="80" viewBox="0 0 120 80"><path d="M109.3 13.6 L70.9 20.2 L75.9 26.5 L11.2 64.2 L18.5 75.9 L81.5 39.3 L86.1 43.7 Z" fill="#fd0202"></path></svg>
<div style="left:242px;top:710px;width:940px;height:21px;background:#40568d;"></div>
<span class="t" style="left: 245.7px; top: 712.5px; font-size: 13px; color: rgb(255, 255, 255); letter-spacing: -0.339px;">Output</span>
<svg style="left:1132px;top:718.5px;" width="8" height="5" viewBox="0 0 8 5"><path d="M0 0 H8 L4 4.6 Z" fill="#d5dcf1"></path></svg>
<svg style="left:1149px;top:714.5px;" width="8" height="12" viewBox="0 0 8 12"><path d="M2 0.6 H6 M2.4 0.6 V6.4 M5.4 0.6 V6.4 M0.4 6.6 H7.6 M4 6.6 V11.6" fill="none" stroke="#d5dcf1" stroke-width="1.1"></path><path d="M4.6 0.6 H5.9 V6.4 H4.6 Z" fill="#d5dcf1"></path></svg>
<svg style="left:1165px;top:715.5px;" width="10" height="10" viewBox="0 0 10 10"><path d="M0.7 0.7 L9.3 9.3 M9.3 0.7 L0.7 9.3" stroke="#d5dcf1" stroke-width="1.2"></path></svg>
<div style="left:242px;top:731px;width:940px;height:23px;background:#c6d0ee;"></div>
<span class="t" style="left: 249.5px; top: 736.5px; font-size: 12.5px; color: rgb(30, 30, 30); letter-spacing: -0.144px;">Show output from:</span>
<div style="left:355px;top:734px;width:300.5px;height:21px;background:#f4f6fd;border:1px solid #b4bddc;"></div>
<span class="t" style="left: 359.5px; top: 736.5px; font-size: 12.5px; color: rgb(30, 30, 30); letter-spacing: -0.169px;">Debug</span>
<svg style="left:645px;top:742.5px;" width="6.4" height="3.6" viewBox="0 0 6.4 3.6"><path d="M0 0 H6.4 L3.2 3.6 Z" fill="#1e1e1e"></path></svg>
<div style="left:662px;top:735px;width:1px;height:19px;background:#aab4d6;"></div>
<svg style="left:669px;top:736px;" width="16" height="15" viewBox="0 0 16 15"><path d="M5 9 V3 Q5 1.5 6.5 1.5 Q8 1.5 8 3 M2 9.5 H13 M1 12.5 H14" fill="none" stroke="#a3acca" stroke-width="1.2"></path></svg>
<div style="left:691.5px;top:735px;width:1px;height:19px;background:#aab4d6;"></div>
<svg style="left:698px;top:736px;" width="16" height="15" viewBox="0 0 16 15"><path d="M3 9.5 H14 M3 12.8 H14 M7 4.5 H2 M4 2.8 L2 4.5 L4 6.2" fill="none" stroke="#a3acca" stroke-width="1.2"></path></svg>
<svg style="left:720px;top:736px;" width="16" height="15" viewBox="0 0 16 15"><path d="M2 9.5 H13 M2 12.8 H13 M7 4.5 H12 M10 2.8 L12 4.5 L10 6.2" fill="none" stroke="#a3acca" stroke-width="1.2"></path></svg>
<div style="left:742.5px;top:735px;width:1px;height:19px;background:#aab4d6;"></div>
<svg style="left:750px;top:736px;" width="16" height="15" viewBox="0 0 16 15"><path d="M8 1.6 H15 M8 4.8 H15 M1 8.4 H15 M1 12 H15" stroke="#30344a" stroke-width="1.4"></path><path d="M1.5 0.8 L5.5 5.4 M5.5 0.8 L1.5 5.4" stroke="#d11f2e" stroke-width="1.3"></path></svg>
<div style="left:772.5px;top:735px;width:1px;height:19px;background:#aab4d6;"></div>
<svg style="left:779.5px;top:736px;" width="17" height="15" viewBox="0 0 17 15"><text x="0" y="6.6" font-size="7.6" font-weight="bold" fill="#30344a" font-family="Liberation Sans, sans-serif">ab</text><text x="0.5" y="12.6" font-size="7" font-weight="bold" fill="#30344a" font-family="Liberation Sans, sans-serif">c</text><path d="M10.5 4.5 H14.5 V10.5 H8 M10 8 L7.4 10.5 L10 13" fill="none" stroke="#2f66b8" stroke-width="1.4"></path></svg>
<div style="left:802px;top:735px;width:1px;height:19px;background:#aab4d6;"></div>
<svg style="left:810px;top:736px;" width="15" height="15" viewBox="0 0 15 15"><circle cx="7.5" cy="7.5" r="6.2" fill="none" stroke="#30344a" stroke-width="1.3"></circle><path d="M7.5 3.6 V7.8 H10.8" fill="none" stroke="#30344a" stroke-width="1.2"></path></svg>
</div>
</body></html>
